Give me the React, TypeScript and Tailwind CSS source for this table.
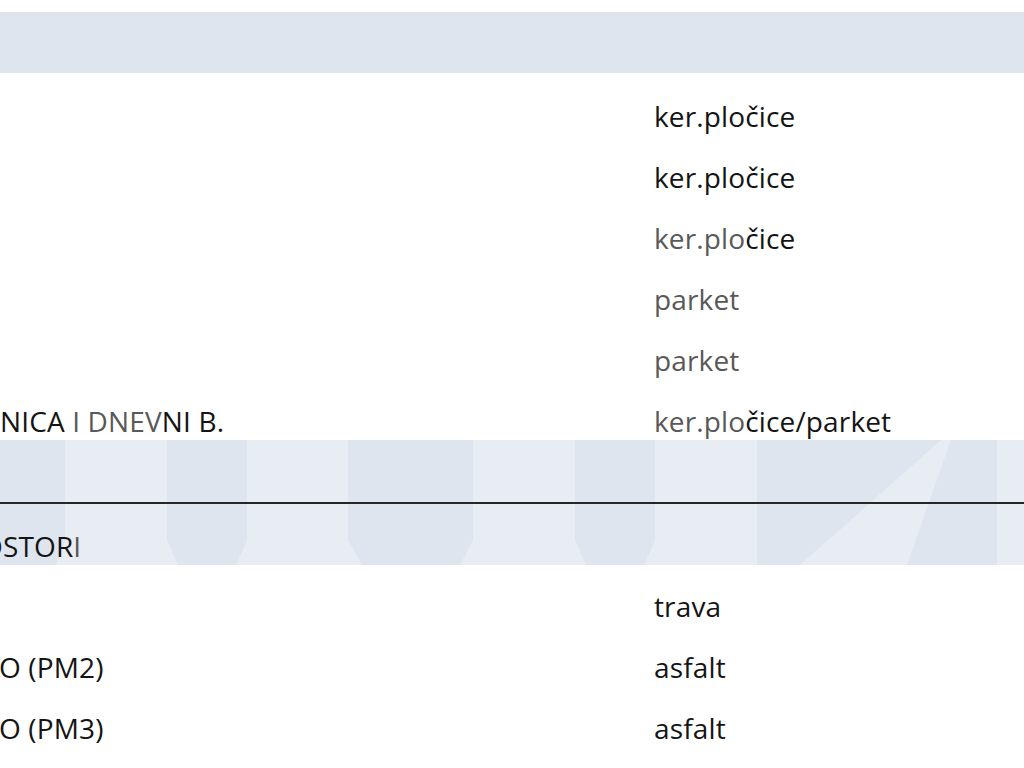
import React from 'react';

type Part = { t: string; dim?: boolean };

interface RowProps {
  left?: Part[];
  right?: Part[];
  leftShift?: string;
}

const dark = 'text-[#141414]';
const dim = 'text-[#595959]';

function Parts({ parts }: { parts?: Part[] }) {
  if (!parts) return null;
  return (
    <>
      {parts.map((p, i) => (
        <span key={i} className={p.dim ? dim : dark}>
          {p.t}
        </span>
      ))}
    </>
  );
}

function Row({ left, right, leftShift = '' }: RowProps) {
  return (
    <div className="grid grid-cols-[654px_1fr] h-[61px] items-center">
      <div className={`whitespace-nowrap ${leftShift}`}>
        <Parts parts={left} />
      </div>
      <div className="whitespace-nowrap">
        <Parts parts={right} />
      </div>
    </div>
  );
}

function Watermark() {
  return (
    <svg
      className="absolute inset-0 w-full h-full pointer-events-none"
      viewBox="0 0 1024 125"
      preserveAspectRatio="none"
    >
      <g fill="#dfe5ee">
        <polygon points="0,0 65,0 65,100 56,125 0,125" />
        <polygon points="167,0 247,0 247,100 236,125 178,125 167,100" />
        <polygon points="348,0 473,0 473,100 460,125 362,125 348,100" />
        <polygon points="575,0 655,0 655,100 644,125 586,125 575,100" />
        <polygon points="757,0 997,0 997,125 757,125" />
      </g>
      <polygon points="941,0 951,0 907,125 800,125" fill="#e8ecf3" />
    </svg>
  );
}

export default function App() {
  return (
    <div
      className="w-[1024px] h-[768px] overflow-hidden bg-white text-[28px] leading-[38px] font-medium tracking-[0.005em]"
      style={{ fontFamily: '"Open Sans", "Noto Sans", sans-serif' }}
    >
      <div className="h-[12px]" />
      <div className="h-[61px] bg-[#dfe5ee]" />

      <div className="pt-[12px] h-[367px]">
        <Row right={[{ t: 'ker.pločice' }]} />
        <Row right={[{ t: 'ker.pločice' }]} />
        <Row right={[{ t: 'ker.plo', dim: true }, { t: 'čice' }]} />
        <Row right={[{ t: 'parket', dim: true }]} />
        <Row right={[{ t: 'parket', dim: true }]} />
        <Row
          left={[{ t: 'NICA ' }, { t: 'I DNEV', dim: true }, { t: 'NI B.' }]}
          right={[{ t: 'ker.plo', dim: true }, { t: 'čice/parket' }]}
        />
      </div>

      <div className="relative h-[125px] bg-[#e8ecf3] flex flex-col">
        <Watermark />
        <div className="h-[62px]" />
        <div className="relative h-[2px] bg-[#262626]" />
        <div className="relative flex-1 flex items-end">
          <div className="-ml-[19px] whitespace-nowrap">
            <span className={dark}>OSTOR</span>
            <span className={dim}>I</span>
          </div>
        </div>
      </div>

      <div className="pt-[10px]">
        <Row right={[{ t: 'trava' }]} />
        <Row left={[{ t: 'O (PM2)' }]} leftShift="-ml-[1px]" right={[{ t: 'asfalt' }]} />
        <Row left={[{ t: 'O (PM3)' }]} leftShift="-ml-[1px]" right={[{ t: 'asfalt' }]} />
      </div>
    </div>
  );
}
